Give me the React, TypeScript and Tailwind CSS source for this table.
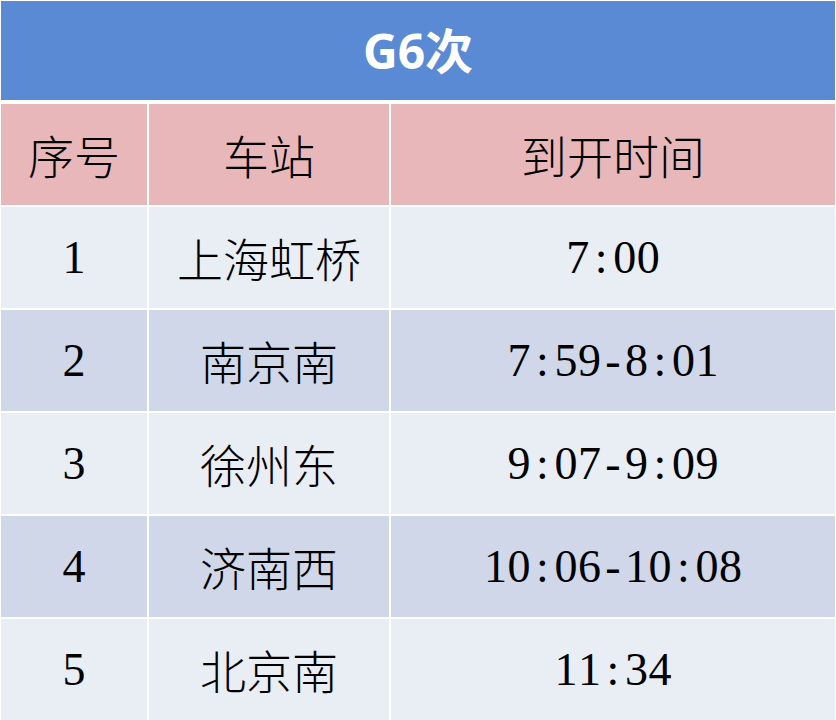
const stops = [
  { no: '1', station: '上海虹桥', time: '7:00' },
  { no: '2', station: '南京南', time: '7:59-8:01' },
  { no: '3', station: '徐州东', time: '9:07-9:09' },
  { no: '4', station: '济南西', time: '10:06-10:08' },
  { no: '5', station: '北京南', time: '11:34' },
];

function MonoTime({ value }: { value: string }) {
  // 半角等宽数字，每个字符占 0.5em
  return (
    <span className="inline-flex font-[Liberation_Serif,serif]">
      {value.split('').map((ch, i) => (
        <span key={i} className="inline-block w-[23.5px] text-center">
          {ch}
        </span>
      ))}
    </span>
  );
}

function HeadCell({ children }: { children: React.ReactNode }) {
  return (
    <div className="h-[101px] bg-[#e8b7ba] flex items-center justify-center font-light font-[Noto_Sans_CJK_SC,sans-serif]">
      {children}
    </div>
  );
}

export default function App() {
  return (
    <div className="w-[836px] h-[720px] bg-white pt-px px-px overflow-hidden">
      <div className="h-[99px] bg-[#5a8ad4] flex items-center justify-center text-white text-[48px] font-bold font-[Open_Sans,Noto_Sans_CJK_SC,sans-serif]">
        G6次
      </div>

      <div className="mt-1 grid grid-cols-[146px_240px_444px] gap-[2px] text-[46px] text-black">
        <HeadCell>序号</HeadCell>
        <HeadCell>车站</HeadCell>
        <HeadCell>到开时间</HeadCell>

        {stops.map((s, i) => {
          const bg = i % 2 === 0 ? 'bg-[#e9edf4]' : 'bg-[#d0d7e8]';
          return [
            <div
              key={s.no + 'a'}
              className={`h-[101px] ${bg} flex items-center justify-center font-[Liberation_Serif,serif]`}
            >
              {s.no}
            </div>,
            <div
              key={s.no + 'b'}
              className={`h-[101px] ${bg} flex items-center justify-center font-light font-[Noto_Sans_CJK_SC,sans-serif]`}
            >
              {s.station}
            </div>,
            <div key={s.no + 'c'} className={`h-[101px] ${bg} flex items-center justify-center`}>
              <MonoTime value={s.time} />
            </div>,
          ];
        })}
      </div>
    </div>
  );
}
